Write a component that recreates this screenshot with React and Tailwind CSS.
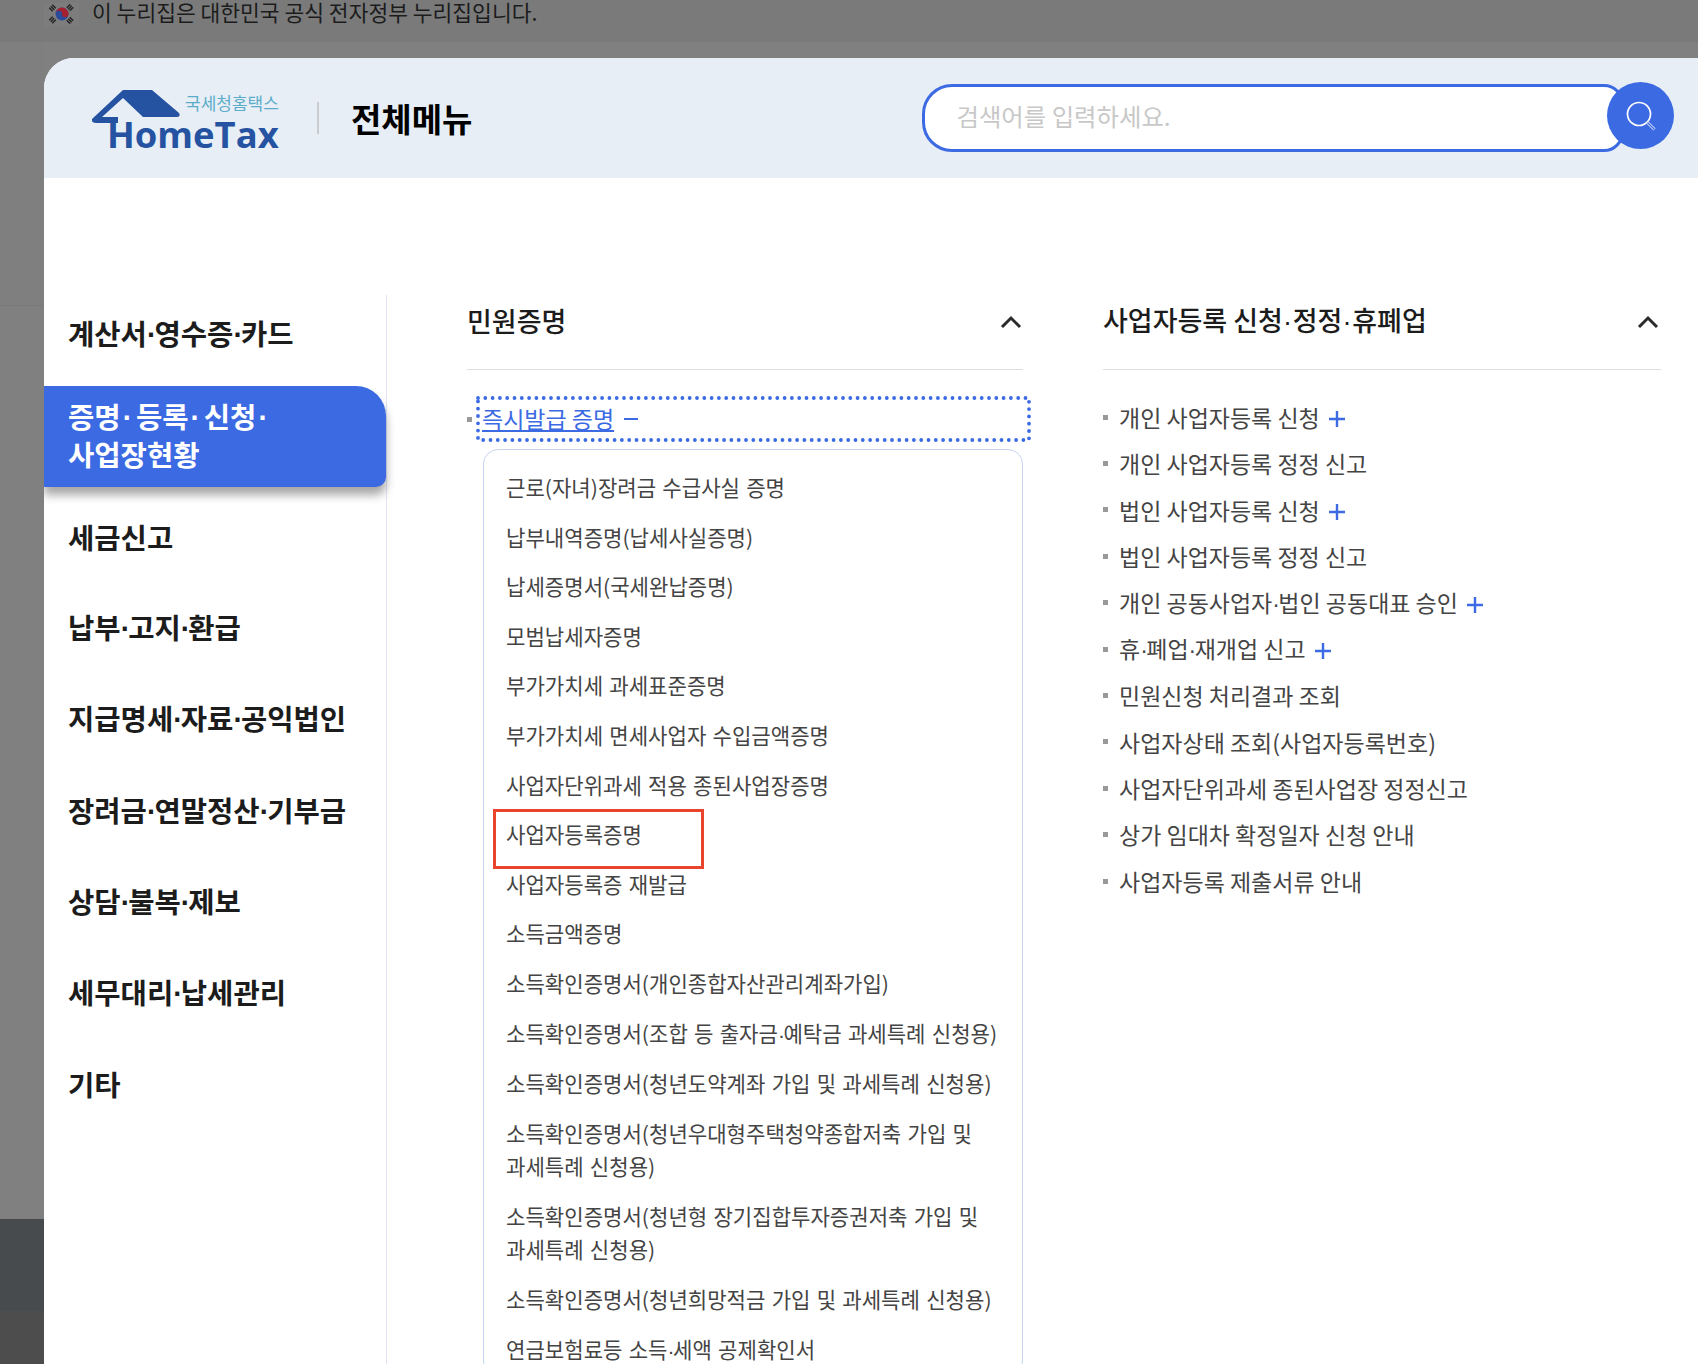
const sideTop = ["세금신고", "납부·고지·환급", "지급명세·자료·공익법인", "장려금·연말정산·기부금", "상담·불복·제보", "세무대리·납세관리", "기타"];

const sub = [
  "근로(자녀)장려금 수급사실 증명",
  "납부내역증명(납세사실증명)",
  "납세증명서(국세완납증명)",
  "모범납세자증명",
  "부가가치세 과세표준증명",
  "부가가치세 면세사업자 수입금액증명",
  "사업자단위과세 적용 종된사업장증명",
  "사업자등록증명",
  "사업자등록증 재발급",
  "소득금액증명",
  "소득확인증명서(개인종합자산관리계좌가입)",
  "소득확인증명서(조합 등 출자금·예탁금 과세특례 신청용)",
  "소득확인증명서(청년도약계좌 가입 및 과세특례 신청용)",
  "소득확인증명서(청년우대형주택청약종합저축 가입 및 과세특례 신청용)",
  "소득확인증명서(청년형 장기집합투자증권저축 가입 및 과세특례 신청용)",
  "소득확인증명서(청년희망적금 가입 및 과세특례 신청용)",
  "연금보험료등 소득·세액 공제확인서",
];

const right = [
  ["개인 사업자등록 신청", true],
  ["개인 사업자등록 정정 신고", false],
  ["법인 사업자등록 신청", true],
  ["법인 사업자등록 정정 신고", false],
  ["개인 공동사업자·법인 공동대표 승인", true],
  ["휴·폐업·재개업 신고", true],
  ["민원신청 처리결과 조회", false],
  ["사업자상태 조회(사업자등록번호)", false],
  ["사업자단위과세 종된사업장 정정신고", false],
  ["상가 임대차 확정일자 신청 안내", false],
  ["사업자등록 제출서류 안내", false],
];

function Dotted({ text, dotClass = "tracking-[-0.07em]" }) {
  const parts = text.split("·");
  return parts.map((p, i) => (
    <span key={i}>
      {p}
      {i < parts.length - 1 && (
        <span className={"[font-family:'Liberation_Sans',sans-serif] " + dotClass}>·</span>
      )}
    </span>
  ));
}

function Chevron() {
  return (
    <svg width="22" height="16" viewBox="0 0 22 16" fill="none" stroke="#2b2b2b" strokeWidth="3" className="mt-[2px]">
      <path d="M2 13 L11 4 L20 13" />
    </svg>
  );
}

function Plus() {
  return (
    <svg width="16" height="16" viewBox="0 0 16 16" stroke="#3b6ae3" strokeWidth="2.4" className="ml-[9px] mt-[4px] shrink-0">
      <path d="M0 8 H16 M8 0 V16" />
    </svg>
  );
}

function Logo() {
  return (
    <div className="relative w-[190px] h-[60px] ml-[48px] shrink-0">
      <svg width="92" height="36" viewBox="0 0 92 36" className="absolute left-0 top-[1.5px]">
        <path fill="#2553a1" d="M0 29 L31 0 H60 L87 23 Q89 27 85 27 H51 L31 8 L10 27 H26 V33 H4 Q-1 33 0 29 Z" />
      </svg>
      <span className="absolute left-[93px] top-[3px] text-[17px] leading-[24px] text-[#5cadc9] whitespace-nowrap">국세청홈택스</span>
      <span className="absolute left-[15px] top-[24px] text-[36.4px] leading-[44px] font-bold text-[#2553a1] whitespace-nowrap [font-family:'Open_Sans',sans-serif]">HomeTax</span>
    </div>
  );
}

function Flag() {
  return (
    <svg width="35" height="23" viewBox="0 0 35 23" className="shrink-0">
      <rect width="35" height="23" fill="#7d7d7e" />
      <circle cx="18" cy="11" r="6.5" fill="#2a4a9a" />
      <path d="M11.5 11 A6.5 6.5 0 0 1 24.5 11 A3.25 3.25 0 0 1 18 11 A3.25 3.25 0 0 0 11.5 11 Z" fill="#a52030" />
      <g stroke="#232323" strokeWidth="5" strokeDasharray="1.4 0.7">
        <path d="M6.5 7 L11 2.5 M24 2.5 L28.5 7 M6.5 15 L11 19.5 M24 19.5 L28.5 15" />
      </g>
    </svg>
  );
}

export default function App() {
  return (
    <div className="w-[1698px] h-[1364px] overflow-hidden bg-[#808081] [font-family:'Noto_Sans_CJK_KR','Noto_Sans',sans-serif]">
      <div className="h-[42px] bg-[#7a7a7b] flex items-start pl-[44px] gap-[13px] pt-[3px]">
        <Flag />
        <span className="text-[21.5px] leading-[22px] -mt-[2px] text-[#1c1c1c] whitespace-nowrap">이 누리집은 대한민국 공식 전자정부 누리집입니다.</span>
      </div>
      <div className="flex">
        <div className="w-[44px] shrink-0 flex flex-col">
          <div className="h-[264px] border-b border-[#7a7a7b] bg-[#7f7f80]" />
          <div className="h-[913px] bg-[#808081]" />
          <div className="h-[92px] bg-[#484b4e]" />
          <div className="h-[53px] bg-[#4d4d4d]" />
        </div>
        <div className="flex-1 mt-[16px] h-[1306px] bg-white rounded-tl-[30px] overflow-hidden">
          <div className="h-[120px] bg-[#e7eef6] flex items-center">
            <Logo />
            <div className="w-[2px] h-[32px] bg-[#c8ccd0] ml-[35px] shrink-0" />
            <div className="ml-[32px] text-[33px] font-bold text-black leading-[40px] whitespace-nowrap">전체메뉴</div>
            <div className="relative ml-[450px] w-[702px] h-[68px] shrink-0 bg-white border-[3px] border-[#3b6ae3] rounded-l-[30px] rounded-r-[20px] flex items-center pl-[31px] pb-[3px] text-[24.4px] text-[#c8c8c8]">
              검색어를 입력하세요.
              <div className="absolute right-[-53px] top-[-5px] w-[67px] h-[67px] rounded-full bg-[#3b6ae3] flex items-center justify-center">
                <svg width="34" height="34" viewBox="0 0 34 34" fill="none" stroke="#fff">
                  <circle cx="15" cy="15" r="11.5" strokeWidth="1.7" />
                  <path d="M23.5 23.5 L30.5 30.5" strokeWidth="3" stroke="#dfe6fa" />
                  <path d="M23.5 23.5 L30.5 30.5" strokeWidth="1.2" stroke="#3b6ae3" />
                </svg>
              </div>
            </div>
          </div>
          <div className="flex pt-[117px]">
            <div className="w-[343px] shrink-0 border-r border-[#e0e4f5] h-[1069px]">
              <div className="h-[78px] flex items-center pl-[24px] text-[28.6px] font-bold text-[#1c1c1c] leading-[36px]"><span><Dotted text="계산서·영수증·카드" /></span></div>
              <div className="mt-[13px] h-[101px] w-[342px] bg-[#3b6ae3] rounded-tr-[30px] rounded-br-[10px] shadow-[0_8px_10px_rgba(0,0,0,0.35)] flex items-center pl-[24px] pb-[4px] text-[28.6px] font-bold text-white leading-[35px]">
                <div>
                  <Dotted text="증명·등록·신청·" dotClass="mx-[2px] tracking-[0.06em]" />
                  <br />사업장현황
                </div>
              </div>
              <div className="mt-[4.5px]">
                {sideTop.map((s) => (
                  <div key={s} className="h-[91.2px] flex items-center pl-[24px] text-[28.6px] font-bold text-[#1c1c1c] leading-[36px]"><span><Dotted text={s} /></span></div>
                ))}
              </div>
            </div>
            <div className="ml-[80px] w-[556px] shrink-0">
              <div className="h-[75px] border-b border-[#dfdfdf] flex items-center justify-between pb-[22px] text-[27px] font-medium text-[#1c1c1c]">
                <span>민원증명</span>
                <span className="mr-[1px]"><Chevron /></span>
              </div>
              <div className="relative mt-[26px] flex items-center">
                <div className="w-[5px] h-[5px] bg-[#999] shrink-0 mr-[4px]" />
                <div className="relative w-[555px] h-[46px] flex items-center pl-[6px] pb-[2px] text-[23px] text-[#3b6ae3] shrink-0">
                  <span className="underline">즉시발급 증명</span>
                  <span className="ml-[10px] w-[14px] h-[2px] mt-[2px] bg-[#3b6ae3]" />
                  <svg width="555" height="46" viewBox="0 0 555 46" fill="none" className="absolute left-0 top-0" stroke="#3b6ae3" strokeWidth="3.8" strokeLinecap="round" strokeDasharray="0 7.3">
                    <rect x="2" y="2" width="551" height="42" />
                  </svg>
                </div>
              </div>
              <div className="ml-[16px] mt-[7px] border border-[#c5d3ee] rounded-[15px] pl-[22px] pr-[20px] pt-[13px]">
                {sub.map((s) => (
                  <div key={s} className="relative py-[8.05px] text-[21.1px] leading-[33.5px] [word-spacing:1.5px] break-keep text-[#444]">
                    <Dotted text={s} />
                    {s === "사업자등록증명" && <div className="absolute left-[-13px] top-[-1px] w-[211px] h-[60px] border-[3px] border-[#e8452c]" />}
                  </div>
                ))}
              </div>
            </div>
            <div className="ml-[80px] w-[558px] shrink-0">
              <div className="h-[75px] border-b border-[#dfdfdf] flex items-center justify-between pb-[22px] text-[27px] font-medium text-[#1c1c1c]">
                <span><Dotted text="사업자등록 신청·정정·휴폐업" dotClass="tracking-[0.03em]" /></span>
                <span className="mr-[2px]"><Chevron /></span>
              </div>
              <div className="mt-[24px]">
                {right.map(([t, p]) => (
                  <div key={t} className="h-[46.4px] flex items-center text-[23px] text-[#444]">
                    <div className="w-[5px] h-[5px] bg-[#999] shrink-0 mr-[11px]" />
                    <span><Dotted text={t} /></span>
                    {p && <Plus />}
                  </div>
                ))}
              </div>
            </div>
          </div>
        </div>
      </div>
    </div>
  );
}
